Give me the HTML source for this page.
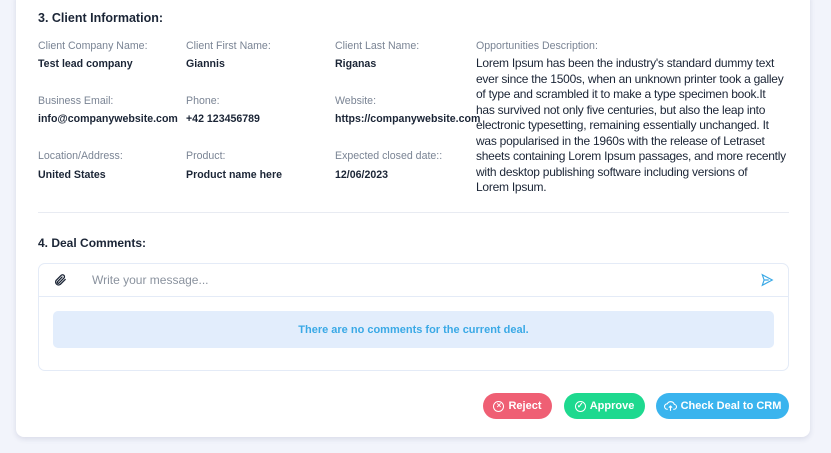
<!DOCTYPE html>
<html><head><style>
*{margin:0;padding:0;box-sizing:border-box}
body{width:831px;height:453px;background:#f2f4fb;font-family:"Liberation Sans",sans-serif;position:relative;overflow:hidden;color:#1b2536}
.card{position:absolute;left:16px;top:-10px;width:794px;height:447px;background:#fff;border-radius:8px;box-shadow:0 2px 6px rgba(30,40,90,.12)}
.a{position:absolute;white-space:nowrap}
h3{position:absolute;font-size:12.5px;font-weight:bold;color:#1b2536}
.l{font-size:10.6px;color:#7a8494}
.v{font-size:10.6px;font-weight:bold;color:#1b2536}
.desc{position:absolute;left:476px;top:56px;font-size:12px;line-height:15.5px;color:#1b2536;white-space:nowrap;letter-spacing:-0.25px}
.btn{position:absolute;top:393px;height:26px;border-radius:13px;color:#fff;font-size:11px;font-weight:bold;display:flex;align-items:center;justify-content:center;gap:4px;line-height:26px}
.ic{display:inline-block;width:11px;height:11px;border:1.3px solid #fff;border-radius:50%;font-size:8px;line-height:8px;text-align:center}
</style></head><body>
<div class="card"></div>
<h3 style="left:38px;top:11px">3. Client Information:</h3>
<div class="a l" style="left:38px;top:40px">Client Company Name:</div>
<div class="a v" style="left:38px;top:58px">Test lead company</div>
<div class="a l" style="left:186px;top:40px">Client First Name:</div>
<div class="a v" style="left:186px;top:58px">Giannis</div>
<div class="a l" style="left:335px;top:40px">Client Last Name:</div>
<div class="a v" style="left:335px;top:58px">Riganas</div>
<div class="a l" style="left:476px;top:40px">Opportunities Description:</div>
<div class="a l" style="left:38px;top:95px">Business Email:</div>
<div class="a v" style="left:38px;top:113px">info@companywebsite.com</div>
<div class="a l" style="left:186px;top:95px">Phone:</div>
<div class="a v" style="left:186px;top:113px">+42 123456789</div>
<div class="a l" style="left:335px;top:95px">Website:</div>
<div class="a v" style="left:335px;top:113px">https://companywebsite.com</div>
<div class="a l" style="left:38px;top:150px">Location/Address:</div>
<div class="a v" style="left:38px;top:169px">United States</div>
<div class="a l" style="left:186px;top:150px">Product:</div>
<div class="a v" style="left:186px;top:169px">Product name here</div>
<div class="a l" style="left:335px;top:150px">Expected closed date::</div>
<div class="a v" style="left:335px;top:169px">12/06/2023</div>
<div class="desc">Lorem Ipsum has been the industry's standard dummy text<br>ever since the 1500s, when an unknown printer took a galley<br>of type and scrambled it to make a type specimen book.It<br>has survived not only five centuries, but also the leap into<br>electronic typesetting, remaining essentially unchanged. It<br>was popularised in the 1960s with the release of Letraset<br>sheets containing Lorem Ipsum passages, and more recently<br>with desktop publishing software including versions of<br>Lorem Ipsum.</div>
<div style="position:absolute;left:38px;top:212px;width:751px;height:1px;background:#e8ebf2"></div>
<h3 style="left:38px;top:236px;font-size:12px">4. Deal Comments:</h3>
<div style="position:absolute;left:38px;top:263px;width:751px;height:108px;border:1px solid #e4ebf7;border-radius:7px">
 <div style="height:33px;border-bottom:1px solid #e4ebf7;position:relative">
  <svg style="position:absolute;left:14px;top:9px" width="14" height="14" viewBox="0 0 24 24" fill="none" stroke="#1b2536" stroke-width="2.2" stroke-linecap="round"><path d="M21 11l-8.5 8.5a5 5 0 01-7-7L14 4a3.3 3.3 0 014.7 4.7l-8.5 8.5a1.7 1.7 0 01-2.4-2.4L15.5 7"/></svg>
  <div class="a" style="left:53px;top:9px;font-size:12px;color:#8a929e">Write your message...</div>
  <svg style="position:absolute;left:721px;top:9px" width="14" height="14" viewBox="0 0 24 24" fill="none" stroke="#3aa9e6" stroke-width="2"><path d="M4 3l17 9-17 9 3-9z M7 12h8"/></svg>
 </div>
 <div style="position:absolute;left:14px;top:47px;width:721px;height:37px;background:#e2edfc;border-radius:5px;display:flex;align-items:center;justify-content:center;font-size:11px;font-weight:bold;color:#3aa9e6">There are no comments for the current deal.</div>
</div>
<div class="btn" style="left:483px;width:69px;background:#ef5f74"><span class="ic">×</span>Reject</div>
<div class="btn" style="left:564px;width:81px;background:#1ed98f"><span class="ic">✓</span>Approve</div>
<div class="btn" style="left:656px;width:133px;background:#3ab4ee"><svg width="13" height="12" viewBox="0 0 24 22" fill="none" stroke="#fff" stroke-width="2"><path d="M7 17H6a5 5 0 010-10 7 7 0 0113 1 4 4 0 01-1 9h-1M12 20v-8M9 14l3-3 3 3"/></svg>Check Deal to CRM</div>
</body></html>
